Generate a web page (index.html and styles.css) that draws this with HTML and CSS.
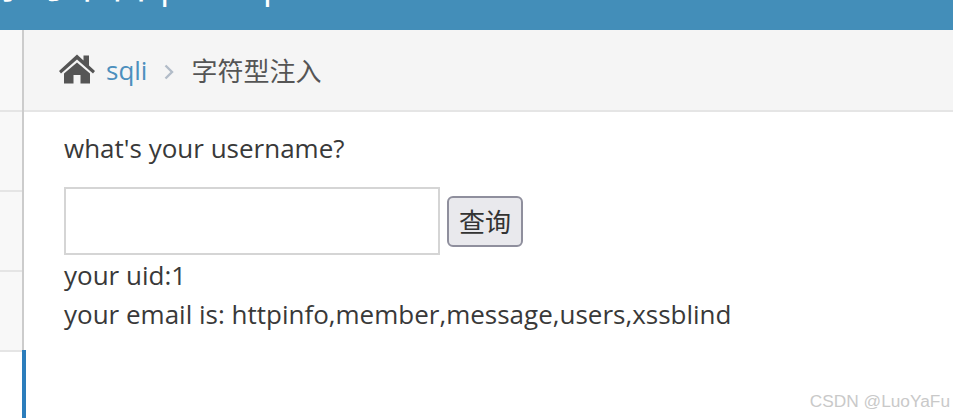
FILE: index.html
```html
<!DOCTYPE html>
<html lang="zh">
<head>
    <meta charset="UTF-8">
    <title>字符型注入</title>
    <link rel="stylesheet" href="styles.css">
</head>
<body>
    <div class="navbar">
        <div class="brand"><span class="brand-latin">Pikachu </span>漏洞练习平台<span class="brand-latin"> pika~ pika~</span></div>
    </div>
    <div class="main">
        <div class="sidebar">
            <div class="side-item"></div>
            <div class="side-item"></div>
            <div class="side-item"></div>
            <div class="side-item"></div>
            <div class="side-active"></div>
        </div>
        <div class="content">
            <div class="breadcrumbs">
                <svg class="home-icon" viewBox="0 0 36 30" width="36" height="30">
                    <path fill="#555" d="M18 0.5 L24.5 6.5 V1.5 H30 V11.5 L36 17 L34 19.5 L18 5.5 L2 19.5 L0 17 Z"/>
                    <path fill="#555" d="M18 8.5 L31 19.5 V29.5 H21.5 V21 H14.5 V29.5 H5 V19.5 Z"/>
                </svg>
                <a class="crumb-link" href="#">sqli</a>
                <svg class="crumb-sep" viewBox="0 0 10 16" width="10" height="16">
                    <path fill="none" stroke="#b2bcc8" stroke-width="2.4" d="M1.5 1.5 L8 8 L1.5 14.5"/>
                </svg>
                <span class="crumb-current">字符型注入</span>
            </div>
            <div class="page">
                <p class="question">what's your username?</p>
                <form class="query-form">
                    <input class="query-input" type="text">
                    <input class="query-btn" type="submit" value="查询">
                </form>
                <p class="result">your uid:1<br>your email is: httpinfo,member,message,users,xssblind</p>
            </div>
        </div>
    </div>
    <div class="watermark">CSDN @LuoYaFu</div>
</body>
</html>
```

FILE: styles.css
```css
html, body {
    height: 100%;
}

body {
    margin: 0;
    overflow: hidden;
    background-color: #fff;
    color: #393939;
    font-family: 'Open Sans', 'Noto Sans CJK SC', sans-serif;
    font-size: 26px;
    position: relative;
}

.navbar {
    height: 30px;
    background-color: #438eb9;
    overflow: hidden;
}

.brand {
    margin-top: -41px;
    margin-left: -246px;
    color: #fff;
    font-size: 42px;
    line-height: 46px;
    white-space: nowrap;
}

.brand-latin {
    font-size: 37px;
}

.main {
    display: flex;
    height: 388px;
}

.sidebar {
    width: 22px;
    flex-shrink: 0;
    border-right: 2px solid #ccc;
    display: flex;
    flex-direction: column;
}

.side-item {
    height: 80px;
    border-bottom: 2px solid #e5e5e5;
    box-sizing: border-box;
    background-color: #f8f8f8;
}

.side-item:first-child {
    height: 82px;
}

.side-active {
    flex: 1;
    margin-top: -2px;
    margin-right: -4px;
    border-right: 4px solid #2b7dbc;
}

.content {
    flex: 1;
}

.breadcrumbs {
    height: 82px;
    box-sizing: border-box;
    border-bottom: 2px solid #e5e5e5;
    background-color: #f5f5f5;
    display: flex;
    align-items: center;
    padding-left: 35px;
    color: #555;
}

.home-icon {
    margin-right: 11px;
    margin-top: -3px;
}

.crumb-link {
    color: #4c8fbd;
    text-decoration: none;
}

.crumb-sep {
    margin: 4px 17px 0 17px;
}

.page {
    padding: 17px 40px 0;
}

.question {
    margin: 0 0 20px;
    line-height: 38px;
}

.query-form {
    display: flex;
    align-items: center;
    gap: 7px;
}

.query-input {
    width: 376px;
    height: 68px;
    box-sizing: border-box;
    border: 2px solid #d5d5d5;
    background-color: #fff;
}

.query-btn {
    width: 76px;
    height: 51px;
    box-sizing: border-box;
    border: 2px solid #8f8f9d;
    border-radius: 6px;
    background-color: #e9e9ed;
    color: #333;
    font-family: 'Noto Sans CJK SC', sans-serif;
    font-size: 26px;
    padding: 0 0 2px;
}

.result {
    margin: 1px 0 0;
    line-height: 39px;
}

.watermark {
    position: absolute;
    right: 3px;
    bottom: 6px;
    color: #c9c9c9;
    font-family: 'Liberation Sans', sans-serif;
    font-size: 17.3px;
}
```
